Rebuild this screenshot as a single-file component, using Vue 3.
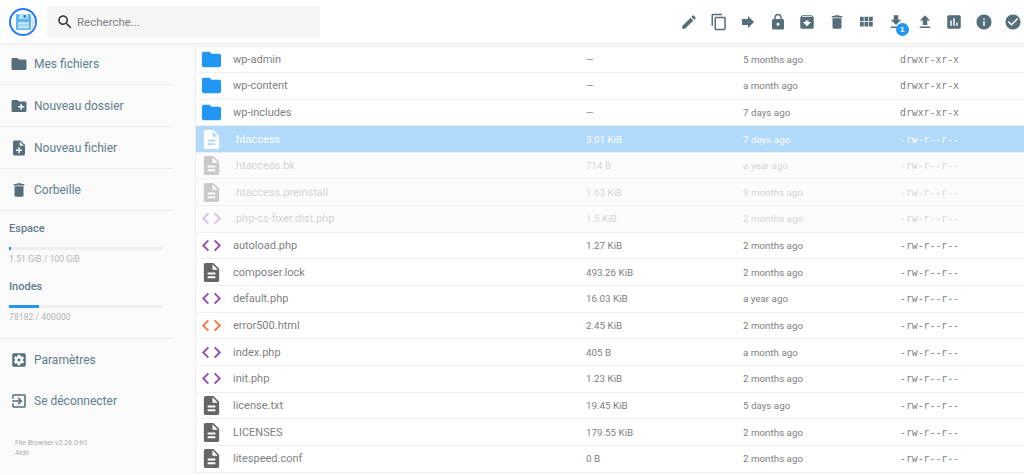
<script setup>
const icons = {
  edit: 'M3 17.25V21h3.75L17.81 9.94l-3.75-3.75L3 17.25zM20.71 7.04c.39-.39.39-1.02 0-1.41l-2.34-2.34c-.39-.39-1.02-.39-1.41 0l-1.83 1.83 3.75 3.75 1.83-1.83z',
  copy: 'M16 1H4c-1.1 0-2 .9-2 2v14h2V3h12V1zm3 4H8c-1.1 0-2 .9-2 2v14c0 1.1.9 2 2 2h11c1.1 0 2-.9 2-2V7c0-1.1-.9-2-2-2zm0 16H8V7h11v14z',
  forward: 'M12 8V4l8 8-8 8v-4H4V8z',
  lock: 'M18 8h-1V6c0-2.76-2.24-5-5-5S7 3.24 7 6v2H6c-1.1 0-2 .9-2 2v10c0 1.1.9 2 2 2h12c1.1 0 2-.9 2-2V10c0-1.1-.9-2-2-2zm-6 9c-1.1 0-2-.9-2-2s.9-2 2-2 2 .9 2 2-.9 2-2 2zm3.1-9H8.9V6c0-1.71 1.39-3.1 3.1-3.1 1.71 0 3.1 1.39 3.1 3.1v2z',
  archive: 'M20.54 5.23l-1.39-1.68C18.88 3.21 18.47 3 18 3H6c-.47 0-.88.21-1.16.55L3.46 5.23C3.17 5.57 3 6.02 3 6.5V19c0 1.1.9 2 2 2h14c1.1 0 2-.9 2-2V6.5c0-.48-.17-.93-.46-1.27zM12 17.5L6.5 12H10v-2h4v2h3.5L12 17.5zM5.12 5l.81-1h12l.94 1H5.12z',
  trash: 'M6 19c0 1.1.9 2 2 2h8c1.1 0 2-.9 2-2V7H6v12zM19 4h-3.5l-1-1h-5l-1 1H5v2h14V4z',
  grid: 'M4 11h5V5H4v6zm0 7h5v-6H4v6zm6 0h5v-6h-5v6zm6 0h5v-6h-5v6zm-6-7h5V5h-5v6zm6-6v6h5V5h-5z',
  download: 'M19 9h-4V3H9v6H5l7 7 7-7zM5 18v2h14v-2H5z',
  upload: 'M9 16h6v-6h4l-7-7-7 7h4zm-4 2h14v2H5z',
  chart: 'M19 3H5c-1.1 0-2 .9-2 2v14c0 1.1.9 2 2 2h14c1.1 0 2-.9 2-2V5c0-1.1-.9-2-2-2zM9 17H7v-7h2v7zm4 0h-2V7h2v10zm4 0h-2v-4h2v4z',
  info: 'M12 2C6.48 2 2 6.48 2 12s4.48 10 10 10 10-4.48 10-10S17.52 2 12 2zm1 15h-2v-6h2v6zm0-8h-2V7h2v2z',
  check: 'M12 2C6.48 2 2 6.48 2 12s4.48 10 10 10 10-4.48 10-10S17.52 2 12 2zm-2 15l-5-5 1.41-1.41L10 14.17l7.59-7.59L19 8l-9 9z',
  search: 'M15.5 14h-.79l-.28-.27C15.41 12.59 16 11.11 16 9.5 16 5.91 13.09 3 9.5 3S3 5.91 3 9.5 5.91 16 9.5 16c1.61 0 3.09-.59 4.23-1.57l.27.28v.79l5 4.99L20.49 19l-4.99-5zm-6 0C7.01 14 5 11.99 5 9.5S7.01 5 9.5 5 14 7.01 14 9.5 11.99 14 9.5 14z',
  folder: 'M10 4H4c-1.1 0-1.99.9-1.99 2L2 18c0 1.1.9 2 2 2h16c1.1 0 2-.9 2-2V8c0-1.1-.9-2-2-2h-8l-2-2z',
  newFolder: 'M20 6h-8l-2-2H4c-1.11 0-1.99.89-1.99 2L2 18c0 1.11.89 2 2 2h16c1.11 0 2-.89 2-2V8c0-1.11-.89-2-2-2zm-1 8h-3v3h-2v-3h-3v-2h3V9h2v3h3v2z',
  newFile: 'M14 2H6c-1.1 0-1.99.9-1.99 2L4 20c0 1.1.89 2 1.99 2H18c1.1 0 2-.9 2-2V8l-6-6zm2 14h-3v3h-2v-3H8v-2h3v-3h2v3h3v2zm-3-7V3.5L18.5 9H13z',
  settings: 'M12 10c-1.1 0-2 .9-2 2s.9 2 2 2 2-.9 2-2-.9-2-2-2zm7-7H5c-1.11 0-2 .9-2 2v14c0 1.1.89 2 2 2h14c1.11 0 2-.9 2-2V5c0-1.1-.89-2-2-2zm-1.75 9c0 .23-.02.46-.05.68l1.48 1.16c.13.11.17.3.08.45l-1.4 2.42c-.09.15-.27.21-.43.15l-1.74-.7c-.36.28-.76.51-1.18.69l-.26 1.85c-.03.17-.18.3-.35.3h-2.8c-.17 0-.32-.13-.35-.29l-.26-1.85c-.43-.18-.82-.41-1.18-.69l-1.74.7c-.16.06-.34 0-.43-.15l-1.4-2.42c-.09-.15-.05-.34.08-.45l1.48-1.16c-.03-.23-.05-.46-.05-.69 0-.23.02-.46.05-.68l-1.48-1.16c-.13-.11-.17-.3-.08-.45l1.4-2.42c.09-.15.27-.21.43-.15l1.74.7c.36-.28.76-.51 1.18-.69l.26-1.85c.03-.17.18-.3.35-.3h2.8c.17 0 .32.13.35.29l.26 1.85c.43.18.82.41 1.18.69l1.74-.7c.16-.06.34 0 .43.15l1.4 2.42c.09.15.05.34-.08.45l-1.48 1.16c.03.23.05.46.05.69z',
  logout: 'M10.09 15.59L11.5 17l5-5-5-5-1.41 1.41L12.67 11H3v2h9.67l-2.58 2.59zM19 3H5c-1.11 0-2 .9-2 2v4h2V5h14v14H5v-4H3v4c0 1.1.89 2 2 2h14c1.1 0 2-.9 2-2V5c0-1.1-.9-2-2-2z',
  code: 'M9.4 16.6L4.8 12l4.6-4.6L8 6l-6 6 6 6 1.4-1.4zm5.2 0l4.6-4.6-4.6-4.6L16 6l6 6-6 6-1.4-1.4z',
  doc: 'M14 2H6c-1.1 0-1.99.9-1.99 2L4 20c0 1.1.89 2 1.99 2H18c1.1 0 2-.9 2-2V8l-6-6zm2 16H8v-2h8v2zm0-4H8v-2h8v2zm-3-5V3.5L18.5 9H13z',
}

const actions = ['edit', 'copy', 'forward', 'lock', 'archive', 'trash', 'grid', 'download', 'upload', 'chart', 'info', 'check']

const topNav = [
  { label: 'Mes fichiers', icon: 'folder' },
  { label: 'Nouveau dossier', icon: 'newFolder' },
  { label: 'Nouveau fichier', icon: 'newFile' },
  { label: 'Corbeille', icon: 'trash' },
]

const usage = [
  { title: 'Espace', pct: 1.5, text: '1.51 GiB / 100 GiB' },
  { title: 'Inodes', pct: 19.5, text: '78182 / 400000' },
]

const DIR = 'drwxr-xr-x'
const REG = '-rw-r--r--'
const files = [
  { name: 'wp-admin', type: 'dir', size: '—', date: '5 months ago', perm: DIR },
  { name: 'wp-content', type: 'dir', size: '—', date: 'a month ago', perm: DIR },
  { name: 'wp-includes', type: 'dir', size: '—', date: '7 days ago', perm: DIR },
  { name: '.htaccess', type: 'doc', size: '3.01 KiB', date: '7 days ago', perm: REG, selected: true },
  { name: '.htaccess.bk', type: 'doc', size: '714 B', date: 'a year ago', perm: REG, dim: true },
  { name: '.htaccess.preinstall', type: 'doc', size: '1.63 KiB', date: '9 months ago', perm: REG, dim: true },
  { name: '.php-cs-fixer.dist.php', type: 'php', size: '1.5 KiB', date: '2 months ago', perm: REG, dim: true },
  { name: 'autoload.php', type: 'php', size: '1.27 KiB', date: '2 months ago', perm: REG },
  { name: 'composer.lock', type: 'doc', size: '493.26 KiB', date: '2 months ago', perm: REG },
  { name: 'default.php', type: 'php', size: '16.03 KiB', date: 'a year ago', perm: REG },
  { name: 'error500.html', type: 'html', size: '2.45 KiB', date: '2 months ago', perm: REG },
  { name: 'index.php', type: 'php', size: '405 B', date: 'a month ago', perm: REG },
  { name: 'init.php', type: 'php', size: '1.23 KiB', date: '2 months ago', perm: REG },
  { name: 'license.txt', type: 'doc', size: '19.45 KiB', date: '5 days ago', perm: REG },
  { name: 'LICENSES', type: 'doc', size: '179.55 KiB', date: '2 months ago', perm: REG },
  { name: 'litespeed.conf', type: 'doc', size: '0 B', date: '2 months ago', perm: REG },
]

const fileIcon = (type) => {
  if (type === 'dir') return icons.folder
  if (type === 'doc') return icons.doc
  return icons.code
}
</script>

<template>
  <div class="app">
    <header class="topbar">
      <div class="logo">
        <svg viewBox="0 0 24 24" width="24" height="24">
          <path d="M21 19 L16 24 H24 V22 Z M20 6 L21 20 L14 24 H24 V10 Z" fill="#e0e0e0" />
          <rect x="5" y="4" width="15" height="16" rx="1.5" fill="#5db7f2" />
          <rect x="8" y="4" width="9" height="5" fill="#b5dff9" />
          <rect x="12.5" y="5" width="2.5" height="3" fill="#2a8fe0" />
          <rect x="7" y="12" width="11" height="6.5" fill="#bfe3fa" />
          <rect x="7" y="14.5" width="11" height="1" fill="#8cc9f3" />
        </svg>
      </div>
      <div class="search">
        <svg viewBox="0 0 24 24" width="18" height="18"><path :d="icons.search" fill="#333" /></svg>
        <span>Recherche...</span>
      </div>
      <div class="actions">
        <button v-for="a in actions" :key="a" class="action">
          <svg viewBox="0 0 24 24" width="18" height="18"><path :d="icons[a]" /></svg>
          <span v-if="a === 'download'" class="badge">1</span>
        </button>
      </div>
    </header>

    <div class="main">
      <aside class="sidebar">
        <a v-for="item in topNav" :key="item.label" class="nav-item ruled">
          <svg viewBox="0 0 24 24" width="18" height="18"><path :d="icons[item.icon]" /></svg>
          {{ item.label }}
        </a>
        <div class="usage">
          <div v-for="u in usage" :key="u.title" class="usage-block">
            <h4>{{ u.title }}</h4>
            <div class="track"><div class="fill" :style="{ width: u.pct + '%' }"></div></div>
            <small>{{ u.text }}</small>
          </div>
        </div>
        <a class="nav-item">
          <svg viewBox="0 0 24 24" width="18" height="18"><path :d="icons.settings" /></svg>
          Paramètres
        </a>
        <a class="nav-item">
          <svg viewBox="0 0 24 24" width="18" height="18"><path :d="icons.logout" /></svg>
          Se déconnecter
        </a>
        <p class="credits">File Browser v2.26.0-h1<br />Aide</p>
      </aside>

      <section class="list">
        <div
          v-for="f in files"
          :key="f.name"
          class="row"
          :class="{ selected: f.selected, dim: f.dim }"
        >
          <svg class="file-icon" :class="f.type" viewBox="0 0 24 24" width="23" height="23"><path :d="fileIcon(f.type)" /></svg>
          <span class="name">{{ f.name }}</span>
          <span class="size">{{ f.size }}</span>
          <span class="date">{{ f.date }}</span>
          <span class="perm">{{ f.perm }}</span>
        </div>
      </section>
    </div>
  </div>
</template>

<style>
html, body {
  margin: 0;
  background: #fafafa;
}
</style>

<style scoped>
.app {
  width: 1024px;
  height: 475px;
  overflow: hidden;
  font-family: Roboto, sans-serif;
  background: #fafafa;
}

.topbar {
  height: 43px;
  display: flex;
  align-items: center;
  background: #fff;
  box-shadow: 0 0 3px rgba(0, 0, 0, 0.12);
  position: relative;
  z-index: 2;
}

.logo {
  width: 24px;
  height: 24px;
  margin-left: 9px;
  border: 2px solid #2979ff;
  border-radius: 50%;
  background: #fff;
  overflow: hidden;
}

.search {
  width: 273px;
  height: 32px;
  margin-left: 10px;
  padding-left: 9px;
  box-sizing: border-box;
  background: #f5f5f5;
  border-radius: 3px;
  display: flex;
  align-items: center;
  gap: 3px;
  font-size: 11.5px;
  color: #808080;
}

.actions {
  margin-left: auto;
  display: flex;
  margin-right: -4px;
}

.action {
  position: relative;
  width: 29.45px;
  height: 30px;
  padding: 0;
  border: none;
  background: none;
  display: flex;
  align-items: center;
  justify-content: center;
  fill: #546e7a;
}

.badge {
  position: absolute;
  left: 15px;
  top: 16px;
  width: 13px;
  height: 13px;
  border-radius: 50%;
  background: #2196f3;
  color: #fff;
  font-size: 8px;
  font-weight: 700;
  line-height: 13px;
  text-align: center;
}

.main {
  display: flex;
  height: 432px;
}

.sidebar {
  width: 195px;
  flex-shrink: 0;
  background: #fafafa;
}

.nav-item {
  width: 173px;
  height: 41.9px;
  box-sizing: border-box;
  padding-left: 10px;
  display: flex;
  align-items: center;
  gap: 6px;
  font-size: 12px;
  color: #607d8b;
  fill: #546e7a;
}

.ruled {
  padding-top: 2px;
  border-bottom: 1px solid rgba(0, 0, 0, 0.05);
}

.usage {
  width: 173px;
  height: 128px;
  box-sizing: border-box;
  padding: 11px 0 0 9px;
  border-bottom: 1px solid rgba(0, 0, 0, 0.05);
}

.usage-block {
  height: 58.5px;
}

.usage h4 {
  margin: 0;
  font-size: 11px;
  line-height: 14px;
  font-weight: 500;
  color: #607d8b;
}

.track {
  width: 153px;
  height: 3px;
  margin-top: 11px;
  background: #eee;
}

.fill {
  height: 100%;
  background: #2196f3;
}

.usage small {
  display: block;
  margin-top: 4px;
  font-size: 8.7px;
  color: #b5b5b5;
}

.credits {
  margin: 17px 0 0 15px;
  font-size: 7px;
  line-height: 9.5px;
  color: #aaa;
}

.list {
  flex: 1;
  padding-top: 2.5px;
  min-width: 0;
}

.row {
  height: 26.67px;
  box-sizing: border-box;
  display: flex;
  align-items: center;
  background: #fff;
  border-bottom: 1px solid #f0f0f0;
  border-left: 1px solid #eee;
  font-size: 11px;
  color: #808080;
  fill: #666;
}

.row:first-child {
  height: 27.37px;
  border-top: 1px solid #eee;
}

.file-icon {
  margin-left: 4px;
  flex-shrink: 0;
}

.file-icon.dir {
  fill: #2196f3;
}

.file-icon.php {
  fill: #8e4fb8;
}

.file-icon.html {
  fill: #ff7043;
}

.name {
  width: 353px;
  margin-left: 10px;
}

.size {
  width: 157px;
  font-size: 9.8px;
}

.date {
  width: 157px;
  font-size: 9.8px;
}

.perm {
  font-family: "DejaVu Sans Mono", monospace;
  font-size: 9.8px;
}

.selected {
  background: #b0d9fa;
  color: #fff;
  fill: #fff;
}

.selected .file-icon {
  fill: #fff;
}

.dim > * {
  opacity: 0.33;
}

.dim {
  background: #fcfcfc;
}
</style>
